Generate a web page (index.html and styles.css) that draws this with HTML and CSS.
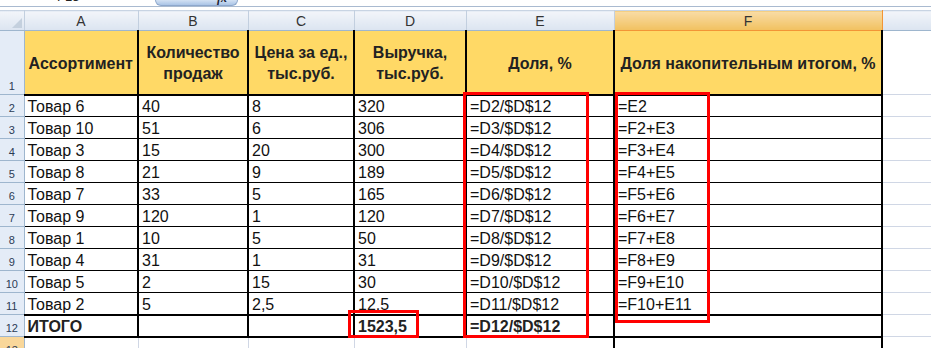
FILE: index.html
```html
<!DOCTYPE html>
<html lang="ru">
<head>
<meta charset="utf-8">
<title>Sheet</title>
<link rel="stylesheet" href="styles.css">
</head>
<body>
<div class="topbar">
  <div class="namebox">F13</div>
  <div class="fxbtn"><span class="fx">fx</span></div>
</div>
<div class="topgap"></div>
<table class="grid">
  <colgroup>
    <col class="w-rn"><col class="w-a"><col class="w-b"><col class="w-c"><col class="w-d"><col class="w-e"><col class="w-f"><col class="w-g">
  </colgroup>
  <tr class="ch">
    <th class="corner"><svg class="tri" width="10" height="10" viewBox="0 0 10 10"><path d="M10 0 L10 10 L0 10 Z" fill="#c4d0de"/></svg></th>
    <th>A</th><th>B</th><th>C</th><th>D</th><th>E</th><th class="sel">F</th><th></th>
  </tr>
  <tr class="r1">
    <th class="rn">1</th>
    <td class="c">Ассортимент</td>
    <td class="c">Количество<br>продаж</td>
    <td class="c">Цена за ед.,<br>тыс.руб.</td>
    <td class="c">Выручка,<br>тыс.руб.</td>
    <td class="c">Доля, %</td>
    <td class="c">Доля накопительным итогом, %</td>
    <td class="g"></td>
  </tr>
  <tr class="r"><th class="rn">2</th><td class="c">Товар 6</td><td class="c">40</td><td class="c">8</td><td class="c">320</td><td class="c">=D2/$D$12</td><td class="c">=E2</td><td class="g"></td></tr>
  <tr class="r"><th class="rn">3</th><td class="c">Товар 10</td><td class="c">51</td><td class="c">6</td><td class="c">306</td><td class="c">=D3/$D$12</td><td class="c">=F2+E3</td><td class="g"></td></tr>
  <tr class="r"><th class="rn">4</th><td class="c">Товар 3</td><td class="c">15</td><td class="c">20</td><td class="c">300</td><td class="c">=D4/$D$12</td><td class="c">=F3+E4</td><td class="g"></td></tr>
  <tr class="r"><th class="rn">5</th><td class="c">Товар 8</td><td class="c">21</td><td class="c">9</td><td class="c">189</td><td class="c">=D5/$D$12</td><td class="c">=F4+E5</td><td class="g"></td></tr>
  <tr class="r"><th class="rn">6</th><td class="c">Товар 7</td><td class="c">33</td><td class="c">5</td><td class="c">165</td><td class="c">=D6/$D$12</td><td class="c">=F5+E6</td><td class="g"></td></tr>
  <tr class="r"><th class="rn">7</th><td class="c">Товар 9</td><td class="c">120</td><td class="c">1</td><td class="c">120</td><td class="c">=D7/$D$12</td><td class="c">=F6+E7</td><td class="g"></td></tr>
  <tr class="r"><th class="rn">8</th><td class="c">Товар 1</td><td class="c">10</td><td class="c">5</td><td class="c">50</td><td class="c">=D8/$D$12</td><td class="c">=F7+E8</td><td class="g"></td></tr>
  <tr class="r"><th class="rn">9</th><td class="c">Товар 4</td><td class="c">31</td><td class="c">1</td><td class="c">31</td><td class="c">=D9/$D$12</td><td class="c">=F8+E9</td><td class="g"></td></tr>
  <tr class="r"><th class="rn">10</th><td class="c">Товар 5</td><td class="c">2</td><td class="c">15</td><td class="c">30</td><td class="c">=D10/$D$12</td><td class="c">=F9+E10</td><td class="g"></td></tr>
  <tr class="r r11"><th class="rn">11</th><td class="c">Товар 2</td><td class="c">5</td><td class="c">2,5</td><td class="c">12,5</td><td class="c">=D11/$D$12</td><td class="c">=F10+E11</td><td class="g"></td></tr>
  <tr class="r r12"><th class="rn">12</th><td class="c b">ИТОГО</td><td class="c"></td><td class="c"></td><td class="c b">1523,5</td><td class="c b">=D12/$D$12</td><td class="c"></td><td class="g"></td></tr>
  <tr class="r r13"><th class="rn rn-sel">13</th><td class="e"></td><td class="e"></td><td class="e"></td><td class="e"></td><td class="e"></td><td class="e active"></td><td class="g"></td></tr>
</table>
<div class="mark mark-e"></div>
<div class="mark mark-f"></div>
<div class="mark mark-d"></div>
</body>
</html>
```

FILE: styles.css
```css
* { box-sizing: border-box; }
html, body { margin: 0; padding: 0; background: #ffffff; }
body {
  width: 931px;
  height: 348px;
  overflow: hidden;
  position: relative;
  font-family: "Liberation Sans", Arial, sans-serif;
  color: #111;
}

/* formula bar remnant */
.topbar {
  height: 7px;
  display: flex;
  align-items: flex-start;
  padding-left: 57px;
  border-bottom: 1px solid #a9bad0;
  overflow: hidden;
}
.namebox {
  width: 98px;
  font-size: 13px;
  line-height: 13px;
  margin-top: -10px;
  color: #222;
}
.fxbtn {
  width: 83px;
  height: 6px;
  border: 1px solid #8ea8cc;
  border-top: none;
  border-radius: 0 0 7px 7px;
  background: linear-gradient(#d3e1f3, #aac4e6);
  display: flex;
  justify-content: flex-end;
  padding-right: 10px;
  overflow: hidden;
}
.fx {
  font-family: "Liberation Serif", serif;
  font-style: italic;
  font-weight: bold;
  font-size: 12px;
  line-height: 12px;
  margin-top: -8px;
  color: #223;
}
.topgap { height: 3px; background: #ffffff; }

/* grid */
.grid {
  border-collapse: collapse;
  table-layout: fixed;
  width: 931px;
}
.w-rn { width: 24px; }
.w-a { width: 114px; }
.w-b { width: 110px; }
.w-c { width: 106px; }
.w-d { width: 112px; }
.w-e { width: 148px; }
.w-f { width: 268px; }
.w-g { width: 49px; }

.ch { height: 20px; }
.ch th {
  background: linear-gradient(#f2f5fa, #dbe4f0);
  border-right: 1px solid #c2cfdf;
  border-bottom: 1px solid #9eb6ce;
  border-top: 1px solid #c8d4e3;
  font-weight: normal;
  font-size: 14px;
  color: #333;
  padding: 0;
  text-align: center;
  vertical-align: middle;
}
.ch th.sel {
  background: linear-gradient(#f9dca6, #f1c15f);
  border-left: 1px solid #f29536;
  border-right: 1px solid #f29536;
  border-bottom: 1px solid #f29536;
}
.ch th.corner {
  text-align: right;
  vertical-align: bottom;
  padding: 0 2px 2px 0;
  line-height: 0;
}
.tri { display: inline-block; }

.rn {
  background: #e4ecf7;
  border-right: 1px solid #9eb6ce;
  border-bottom: 1px solid #9eb6ce;
  font-weight: normal;
  font-size: 11px;
  line-height: 12px;
  color: #2b3b55;
  text-align: center;
  vertical-align: bottom;
  padding: 0 0 2px 0;
}
.rn-sel { background: #f9d79a; border-top: 1px solid #f29536; }

.r1 { height: 64px; }
.r { height: 22px; }
.r13 { height: 22px; }

.c {
  border-left: 2px solid #000;
  border-right: 2px solid #000;
  border-bottom: 1px solid #000;
  font-size: 16px;
  line-height: 18px;
  padding: 0 2px 0 3px;
  vertical-align: bottom;
  white-space: nowrap;
  overflow: hidden;
}
.grid td:nth-child(2) { border-left: 1px solid #9eb6ce; }
.r1 .c {
  background: #ffd966;
  font-weight: bold;
  color: #222;
  text-align: center;
  vertical-align: middle;
  line-height: 21px;
  padding: 2px 2px 0 2px;
  border-bottom: 2px solid #000;
}
.r11 .c, .r12 .c { border-bottom: 2px solid #000; }
.b { font-weight: bold; color: #222; }

.g {
  border-bottom: 1px solid #d0d7e5;
  padding: 0;
}
.r1 .g { border-bottom: 1px solid #d0d7e5; }
.e {
  border-right: 1px solid #d0d7e5;
  padding: 0;
}
.e.active {
  border-left: 2px solid #000;
  border-right: 2px solid #000;
}

/* red annotation frames */
.mark {
  position: absolute;
  border: 3px solid #ff0000;
}
.mark-e { left: 463px; top: 92px; width: 126px; height: 246px; }
.mark-f { left: 615px; top: 92px; width: 95px; height: 231px; }
.mark-d { left: 348px; top: 310px; width: 71px; height: 28px; }
```
